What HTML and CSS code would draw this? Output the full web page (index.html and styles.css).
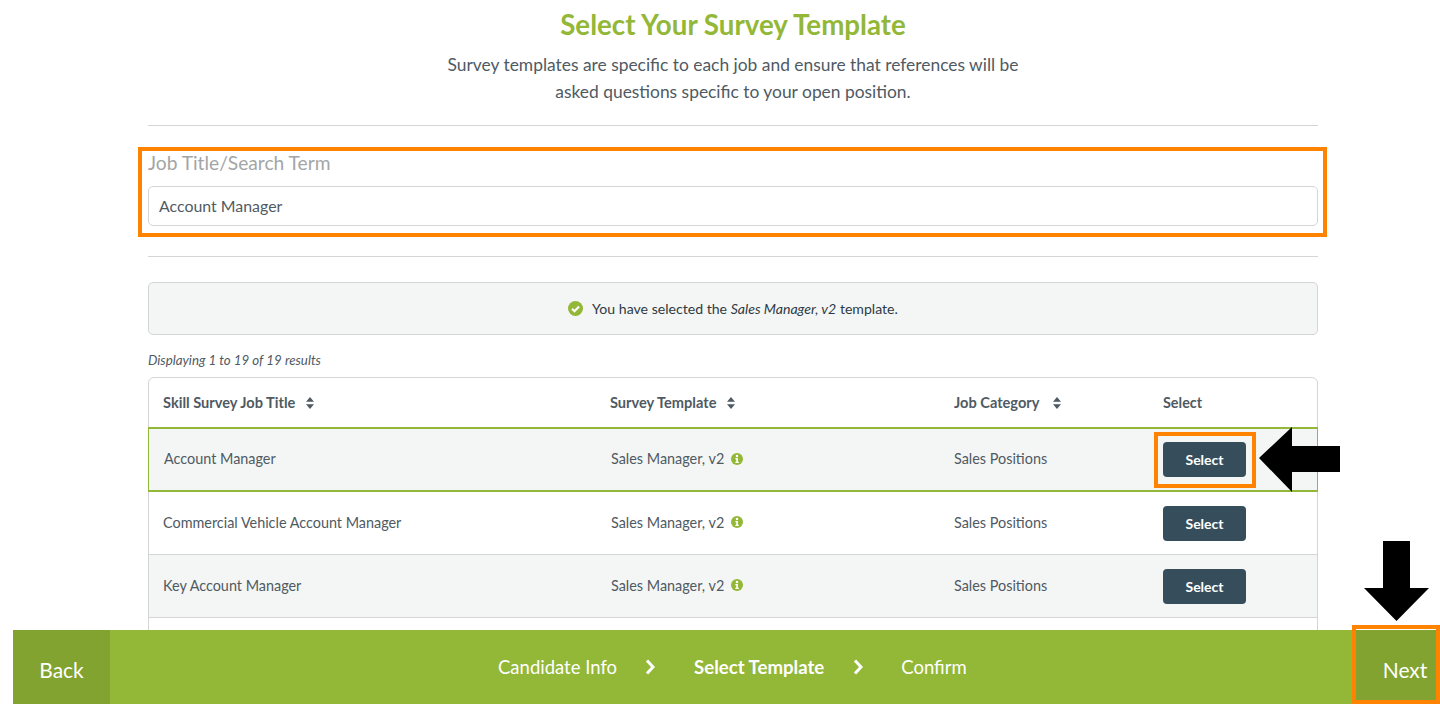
FILE: index.html
```html
<!DOCTYPE html>
<html lang="en">
<head>
<meta charset="utf-8">
<title>Select Your Survey Template</title>
<link rel="stylesheet" href="styles.css">
</head>
<body>
<main class="page">
  <h1 class="title">Select Your Survey Template</h1>
  <p class="intro">Survey templates are specific to each job and ensure that references will be<br>asked questions specific to your open position.</p>
  <hr class="rule rule-top">
  <section class="search">
    <label class="search-label" for="term">Job Title/Search Term</label>
    <input class="search-input" id="term" value="Account Manager">
  </section>
  <hr class="rule rule-bottom">
  <div class="notice">
    <svg class="notice-icon" viewBox="0 0 16 16"><circle cx="8" cy="8" r="8" fill="#93b737"/><path d="M4.3 8.3l2.6 2.6 4.9-5" fill="none" stroke="#fff" stroke-width="2.2"/></svg>
    <span>You have selected the <em>Sales Manager, v2</em> template.</span>
  </div>
  <p class="count">Displaying 1 to 19 of 19 results</p>
  <div class="table">
    <div class="row head">
      <div class="c1">Skill Survey Job Title<svg class="sort" viewBox="0 0 10 12"><path d="M5 0l4 4.800H1zM5 12L1 7.200h8z"/></svg></div>
      <div class="c2">Survey Template<svg class="sort" viewBox="0 0 10 12"><path d="M5 0l4 4.800H1zM5 12L1 7.200h8z"/></svg></div>
      <div class="c3">Job Category<svg class="sort" viewBox="0 0 10 12"><path d="M5 0l4 4.800H1zM5 12L1 7.200h8z"/></svg></div>
      <div class="c4">Select</div>
    </div>
    <div class="row selected">
      <div class="c1">Account Manager</div>
      <div class="c2">Sales Manager, v2<svg class="info" viewBox="0 0 16 16"><circle cx="8" cy="8" r="8" fill="#93b737"/><circle cx="8" cy="4" r="1.700" fill="#fff"/><path d="M5.800 6.800h3.400v5h1.200v1.500H5.800v-1.500h1.200V8.300H5.800z" fill="#fff"/></svg></div>
      <div class="c3">Sales Positions</div>
      <div class="c4"><button class="btn">Select</button></div>
    </div>
    <div class="row">
      <div class="c1">Commercial Vehicle Account Manager</div>
      <div class="c2">Sales Manager, v2<svg class="info" viewBox="0 0 16 16"><circle cx="8" cy="8" r="8" fill="#93b737"/><circle cx="8" cy="4" r="1.700" fill="#fff"/><path d="M5.800 6.800h3.400v5h1.200v1.500H5.800v-1.500h1.200V8.300H5.800z" fill="#fff"/></svg></div>
      <div class="c3">Sales Positions</div>
      <div class="c4"><button class="btn">Select</button></div>
    </div>
    <div class="row shaded">
      <div class="c1">Key Account Manager</div>
      <div class="c2">Sales Manager, v2<svg class="info" viewBox="0 0 16 16"><circle cx="8" cy="8" r="8" fill="#93b737"/><circle cx="8" cy="4" r="1.700" fill="#fff"/><path d="M5.800 6.800h3.400v5h1.200v1.500H5.800v-1.500h1.200V8.300H5.800z" fill="#fff"/></svg></div>
      <div class="c3">Sales Positions</div>
      <div class="c4"><button class="btn">Select</button></div>
    </div>
    <div class="row"></div>
  </div>
</main>
<footer class="footer">
  <a class="foot-btn back">Back</a>
  <nav class="steps">
    <span>Candidate Info</span>
    <svg class="chev" viewBox="0 0 10 16"><path d="M2 1.500L8 8l-6 6.500" fill="none" stroke="#fff" stroke-width="3"/></svg>
    <strong>Select Template</strong>
    <svg class="chev" viewBox="0 0 10 16"><path d="M2 1.500L8 8l-6 6.500" fill="none" stroke="#fff" stroke-width="3"/></svg>
    <span>Confirm</span>
  </nav>
  <a class="foot-btn next">Next</a>
</footer>
<div class="mark mark-search"></div>
<div class="mark mark-select"></div>
<div class="mark mark-next"></div>
<svg class="arrow arrow-left" viewBox="0 0 81 65"><path d="M0 31L33 0v19h48v26H33v20z"/></svg>
<svg class="arrow arrow-down" viewBox="0 0 65 80"><path d="M19 0h27v47h19L32.500 80 0 47h19z"/></svg>
</body>
</html>
```
FILE: styles.css
```css
* { box-sizing: border-box; }
html, body { margin: 0; height: 704px; overflow: hidden; background: #fff; }
body { position: relative; font-family: Lato, "Open Sans", sans-serif; color: #4f5a63; }
.page { width: 1170px; margin-left: 148px; }
.title { margin: 0; padding-top: 8px; height: 51px; line-height: 33px; font-size: 27.7px; font-weight: 700; color: #93b737; text-align: center; }
.intro { margin: 0; font-size: 17.4px; line-height: 27px; text-align: center; }
.rule { margin: 0; border: 0; border-top: 1px solid #d3d5d6; }
.rule-top { margin-top: 20px; }
.search { padding-top: 25px; height: 130px; }
.search-label { display: block; font-size: 19.2px; line-height: 24px; color: #a3a5a6; }
.search-input { display: block; width: 100%; height: 40px; margin-top: 11px; padding: 0 10px 2px; border: 1px solid #d3d5d6; border-radius: 5px; font: 15.9px Lato, sans-serif; color: #4f5a63; background: #fff; }
.notice { display: flex; align-items: center; justify-content: center; gap: 9px; height: 53px; margin-top: 25px; border: 1px solid #d3d5d6; border-radius: 5px; background: #f4f6f5; font-size: 14.1px; color: #2e3a44; }
.notice-icon { width: 15px; height: 15px; }
.count { margin: 0; padding-top: 17px; height: 42px; line-height: 16px; font-size: 13.3px; font-style: italic; }
.table { border: 1px solid #d3d5d6; border-radius: 6px 6px 0 0; font-size: 14.4px; }
.row { display: flex; align-items: center; height: 63px; border-bottom: 1px solid #d3d5d6; }
.row > div:not(.c4) { margin-bottom: 2px; }
.head { height: 49px; font-weight: 700; border-bottom: 0; font-size: 14.6px; }
.head > div:not(.c4) { margin-bottom: 0; }
.head .c4 { font-size: 14.4px; }
.selected { height: 65px; background: #f4f6f5; border: 2px solid #93b737; border-width: 2px 1px; margin: 0 -1px; padding-left: 1px; padding-right: 1px; }
.shaded { background: #f4f6f5; }
.c1 { width: 447px; padding-left: 14px; }
.c2 { width: 344px; padding-left: 15px; display: flex; align-items: center; }
.head .c2 { padding-left: 14px; }
.c3 { width: 209px; padding-left: 14px; }
.c4 { padding-left: 14px; }
.selected .c2 { padding-left: 14px; }
.selected .c3 { padding-left: 13px; }
.selected .c4 { padding-left: 13px; }
.sort { width: 10px; height: 12px; margin-left: 10px; fill: #4f5a63; }
.head .c3 .sort { margin-left: 13px; }
.head .c1, .head .c3 { display: flex; align-items: center; }
.info { width: 12px; height: 12px; margin-left: 7px; }
.btn { display: block; width: 83px; height: 35px; padding: 0; border: 0; border-radius: 4px; background: #364e5c; color: #fff; font: 700 14px Lato, sans-serif; }
.footer { position: absolute; left: 13px; right: 0; bottom: 0; height: 74px; display: flex; align-items: stretch; background: #93b737; color: #fff; }
.foot-btn { display: flex; align-items: center; justify-content: center; padding-top: 4px; background: #82a32f; font-size: 21px; }
.back { width: 97px; }
.next { width: 84px; margin-left: auto; padding-left: 14px; }
.steps { position: absolute; left: 485px; top: 0; height: 61px; padding-top: 12px; display: flex; align-items: center; font-size: 18.5px; }
.steps strong { font-weight: 700; font-size: 18.6px; }
.chev { width: 10px; height: 16px; margin: 0 39px 0 28px; }
.steps strong + .chev { margin: 0 38px 0 29px; }
.mark { position: absolute; border: 4px solid #ff8200; }
.mark-search { left: 138px; top: 147px; width: 1189px; height: 90px; }
.mark-select { left: 1154px; top: 432px; width: 102px; height: 56px; }
.mark-next { left: 1352px; top: 625px; width: 88px; height: 79px; }
.arrow { position: absolute; fill: #000; }
.arrow-left { left: 1259px; top: 427px; width: 81px; height: 65px; }
.arrow-down { left: 1364px; top: 541px; width: 65px; height: 80px; }
```
